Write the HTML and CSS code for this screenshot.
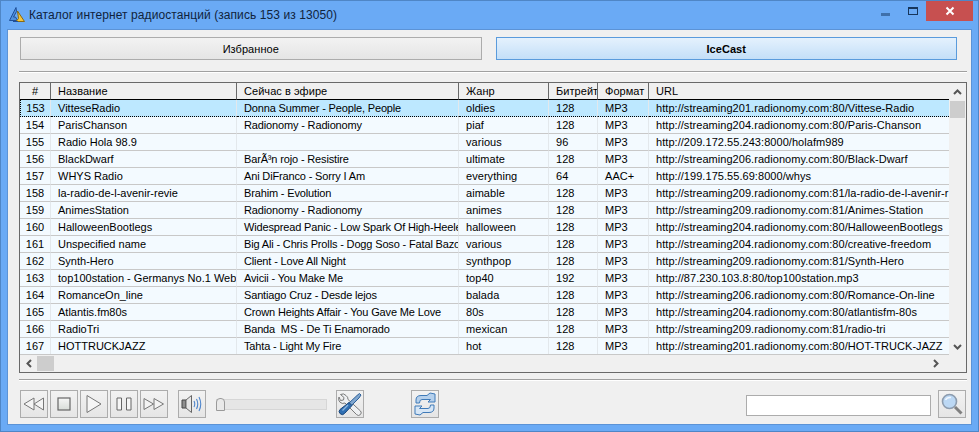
FILE: index.html
```html
<!DOCTYPE html>
<html>
<head>
  <title>Каталог интернет радиостанций</title>
  <meta charset="utf-8">
  <link rel="stylesheet" href="styles.css">
</head>
<body>
<div class="window">
  <div class="titlebar">
    <svg class="app-icon" width="18" height="18" viewBox="0 0 18 18">
      <path d="M8 1.500 L1.500 14.500 H9.500 L7.500 11 H5.500 L8.500 5.500 Z" fill="#4f8fdc" stroke="#1f4f98"/>
      <path d="M9.500 5 L16.500 15.500 H8 L10.500 12.500 Z" fill="#f4c53c" stroke="#8a6a12"/>
      <path d="M5 15.500 H10" stroke="#1f4f98"/>
    </svg>
    <span class="title">Каталог интернет радиостанций (запись 153 из 13050)</span>
    <div class="caption">
      <div class="cap-btn"><span class="cap-min"></span></div>
      <div class="cap-btn cap-btn-max"><span class="cap-max"></span></div>
      <div class="cap-close">
        <svg width="10" height="10" viewBox="0 0 10 10"><path d="M1.500 1.500 L8.500 8.500 M8.500 1.500 L1.500 8.500" stroke="#fff" stroke-width="2"/></svg>
      </div>
    </div>
  </div>

  <div class="client">
    <div class="tabs">
      <div class="tab">Избранное</div>
      <div class="tab active">IceCast</div>
    </div>
    <div class="sep"></div>

    <div class="list">
      <div class="list-main">
        <div class="list-cols">
          <table class="stations">
            <colgroup>
              <col class="c-num"><col class="c-name"><col class="c-now"><col class="c-genre"><col class="c-rate"><col class="c-fmt"><col class="c-url">
            </colgroup>
            <thead>
              <tr><th class="center">#</th><th>Название</th><th>Сейчас в эфире</th><th>Жанр</th><th>Битрейт</th><th>Формат</th><th>URL</th></tr>
            </thead>
            <tbody>
              <tr class="selected"><td class="center">153</td><td>VitteseRadio</td><td>Donna Summer - People, People</td><td>oldies</td><td>128</td><td>MP3</td><td>http://streaming201.radionomy.com:80/Vittese-Radio</td></tr>
              <tr><td class="center">154</td><td>ParisChanson</td><td>Radionomy - Radionomy</td><td>piaf</td><td>128</td><td>MP3</td><td>http://streaming204.radionomy.com:80/Paris-Chanson</td></tr>
              <tr><td class="center">155</td><td>Radio Hola 98.9</td><td></td><td>various</td><td>96</td><td>MP3</td><td>http://209.172.55.243:8000/holafm989</td></tr>
              <tr><td class="center">156</td><td>BlackDwarf</td><td>BarÃ³n rojo - Resistire</td><td>ultimate</td><td>128</td><td>MP3</td><td>http://streaming206.radionomy.com:80/Black-Dwarf</td></tr>
              <tr><td class="center">157</td><td>WHYS Radio</td><td>Ani DiFranco - Sorry I Am</td><td>everything</td><td>64</td><td>AAC+</td><td>http://199.175.55.69:8000/whys</td></tr>
              <tr><td class="center">158</td><td>la-radio-de-l-avenir-revie</td><td>Brahim - Evolution</td><td>aimable</td><td>128</td><td>MP3</td><td>http://streaming209.radionomy.com:81/la-radio-de-l-avenir-r</td></tr>
              <tr><td class="center">159</td><td>AnimesStation</td><td>Radionomy - Radionomy</td><td>animes</td><td>128</td><td>MP3</td><td>http://streaming209.radionomy.com:81/Animes-Station</td></tr>
              <tr><td class="center">160</td><td>HalloweenBootlegs</td><td>Widespread Panic - Low Spark Of High-Heele</td><td>halloween</td><td>128</td><td>MP3</td><td>http://streaming204.radionomy.com:80/HalloweenBootlegs</td></tr>
              <tr><td class="center">161</td><td>Unspecified name</td><td>Big Ali - Chris Prolls - Dogg Soso - Fatal Bazoo</td><td>various</td><td>128</td><td>MP3</td><td>http://streaming204.radionomy.com:80/creative-freedom</td></tr>
              <tr><td class="center">162</td><td>Synth-Hero</td><td>Client - Love All Night</td><td>synthpop</td><td>128</td><td>MP3</td><td>http://streaming209.radionomy.com:81/Synth-Hero</td></tr>
              <tr><td class="center">163</td><td>top100station - Germanys No.1 Web</td><td>Avicii - You Make Me</td><td>top40</td><td>192</td><td>MP3</td><td>http://87.230.103.8:80/top100station.mp3</td></tr>
              <tr><td class="center">164</td><td>RomanceOn_line</td><td>Santiago Cruz - Desde lejos</td><td>balada</td><td>128</td><td>MP3</td><td>http://streaming206.radionomy.com:80/Romance-On-line</td></tr>
              <tr><td class="center">165</td><td>Atlantis.fm80s</td><td>Crown Heights Affair - You Gave Me Love</td><td>80s</td><td>128</td><td>MP3</td><td>http://streaming204.radionomy.com:80/atlantisfm-80s</td></tr>
              <tr><td class="center">166</td><td>RadioTri</td><td>Banda&nbsp;&nbsp;MS - De Ti Enamorado</td><td>mexican</td><td>128</td><td>MP3</td><td>http://streaming209.radionomy.com:81/radio-tri</td></tr>
              <tr><td class="center">167</td><td>HOTTRUCKJAZZ</td><td>Tahta - Light My Fire</td><td>hot</td><td>128</td><td>MP3</td><td>http://streaming201.radionomy.com:80/HOT-TRUCK-JAZZ</td></tr>
            </tbody>
          </table>
        </div>
        <div class="vscroll">
          <svg class="arrow" width="9" height="6" viewBox="0 0 9 6"><path d="M1 5 L4.500 1.500 L8 5" fill="none" stroke="#555" stroke-width="2"/></svg>
          <div class="vthumb"></div>
          <svg class="arrow arrow-down" width="9" height="6" viewBox="0 0 9 6"><path d="M1 1 L4.500 4.500 L8 1" fill="none" stroke="#555" stroke-width="2"/></svg>
        </div>
      </div>
      <div class="hscroll">
        <svg width="6" height="9" viewBox="0 0 6 9"><path d="M5 1 L1.500 4.500 L5 8" fill="none" stroke="#555" stroke-width="2"/></svg>
        <div class="hthumb"></div>
        <svg class="arrow-right" width="6" height="9" viewBox="0 0 6 9"><path d="M1 1 L4.500 4.500 L1 8" fill="none" stroke="#555" stroke-width="2"/></svg>
      </div>
    </div>

    <div class="sep sep-bottom"></div>

    <div class="toolbar">
      <div class="btn"><svg width="22" height="14" viewBox="0 0 22 14"><path d="M1 7 L11 1 V13 Z M11 7 L20.500 1 V13 Z" fill="#f4f4f4" stroke="#777"/></svg></div>
      <div class="btn"><svg width="14" height="14" viewBox="0 0 14 14"><defs><linearGradient id="stopg" x1="0" y1="0" x2="0" y2="1"><stop offset="0" stop-color="#f6f6f6"/><stop offset="1" stop-color="#d8dcd8"/></linearGradient></defs><rect x="1" y="1" width="12" height="12" fill="url(#stopg)" stroke="#666" stroke-width="1.200"/></svg></div>
      <div class="btn"><svg width="16" height="20" viewBox="0 0 16 20"><path d="M1 1.500 L15 10 L1 18.500 Z" fill="#f6f6f6" stroke="#777"/></svg></div>
      <div class="btn"><svg width="16" height="14" viewBox="0 0 16 14"><path d="M1 1 H5.500 V13 H1 Z M10.500 1 H15 V13 H10.500 Z" fill="#f6f6f6" stroke="#666"/></svg></div>
      <div class="btn"><svg width="22" height="14" viewBox="0 0 22 14"><path d="M1 1.500 L10.500 7 L1 12.500 Z M11 1.500 L20.500 7 L11 12.500 Z" fill="#f4f4f4" stroke="#777"/></svg></div>
      <div class="btn btn-volume">
        <svg width="22" height="20" viewBox="0 0 22 20">
          <path d="M1 6 H5 V14 H1 Z" fill="#8e8e8e" stroke="#444"/>
          <path d="M5 6 L10.500 1.500 V18.500 L5 14 Z" fill="#e6e6e6" stroke="#666"/>
          <path d="M13 7 Q14.500 10 13 13 M15.500 5 Q18 10 15.500 15 M18 3 Q21.500 10 18 17" fill="none" stroke="#4f86cc" stroke-width="1.100"/>
        </svg>
      </div>
      <div class="slider"><div class="slider-thumb"></div></div>
      <div class="btn btn-tools">
        <svg width="24" height="24" viewBox="0 0 24 24">
          <path d="M8 3.500 A4.500 4.500 0 0 0 2.500 2.500 L6 5.500 L5.500 8 L2.500 8.500 L1 5 A4.500 4.500 0 0 0 7 11 L18.500 22.500 A2 2 0 0 0 22.500 19 L10 7.500 A4.500 4.500 0 0 0 8 3.500 Z" fill="#eef0f2" stroke="#7a7a7a"/>
          <path d="M21.500 1.500 L23 3 L21 6 L13 14 L10.500 11.500 L19 3.500 Z" fill="#7fa6cf" stroke="#2d5f98"/>
          <path d="M11 10.500 L14 13.500 L6.500 21.500 A3 3 0 0 1 2 17.500 Z" fill="#2f6fb3" stroke="#1a4578"/>
          <path d="M10 13 L4.500 18.500" stroke="#8db7e0" stroke-width="1.200"/>
        </svg>
      </div>
      <div class="btn btn-refresh">
        <svg width="24" height="24" viewBox="0 0 24 24">
          <path d="M3 11 V8 Q3 3.500 8 3.500 H14 L17 1 L22 2 V10 H15 L17.500 7.500 H9 Q6.500 7.500 6.500 11 Z" fill="#b5d0ec" stroke="#3f7ab8"/>
          <path d="M21 13 V16 Q21 20.500 16 20.500 H10 L7 23 L2 22 V14 H9 L6.500 16.500 H15 Q17.500 16.500 17.500 13 Z" fill="#d6e6f6" stroke="#3f7ab8"/>
        </svg>
      </div>
      <input class="search" type="text">
      <div class="btn btn-search">
        <svg width="24" height="24" viewBox="0 0 24 24">
          <circle cx="9.500" cy="9.500" r="7" fill="#bcd8f4" stroke="#8d9cae" stroke-width="1.600"/>
          <path d="M5.500 8 Q7 5 11 5.500" fill="none" stroke="#f0f7ff" stroke-width="1.500"/>
          <path d="M15 15 L21.500 21.500" stroke="#808080" stroke-width="3"/>
        </svg>
      </div>
    </div>
  </div>
</div>
</body>
</html>
```

FILE: styles.css
```css
* {
  box-sizing: border-box;
}
html, body {
  margin: 0;
  height: 100%;
  overflow: hidden;
}
body {
  font-family: "Liberation Sans", Arial, sans-serif;
  font-size: 11px;
  letter-spacing: 0.05px;
  color: #000;
}
.window {
  width: 979px;
  height: 432px;
  background: #6aaaf5;
  border: 1px solid #4f86c6;
  display: flex;
  flex-direction: column;
}
.titlebar {
  height: 28px;
  display: flex;
  align-items: center;
  padding-left: 7px;
  flex: none;
}
.app-icon {
  margin-right: 3px;
}
.title {
  font-size: 12px;
  letter-spacing: 0.08px;
  color: #10233c;
}
.caption {
  margin-left: auto;
  margin-right: 5px;
  align-self: flex-start;
  display: flex;
}
.cap-btn {
  width: 27px;
  height: 20px;
  display: flex;
  align-items: center;
  justify-content: center;
}
.cap-btn-max {
  padding-left: 1px;
}
.cap-min {
  width: 9px;
  height: 3px;
  margin-top: 6px;
  background: #3f70ab;
}
.cap-max {
  width: 10px;
  height: 8px;
  border: 1px solid #17365c;
  border-top-width: 2px;
}
.cap-close {
  width: 47px;
  height: 20px;
  background: #c75050;
  display: flex;
  align-items: center;
  justify-content: center;
}
.client {
  flex: 1;
  margin: 0 6px 6px 6px;
  background: #f0f0f0;
  border: 1px solid #5c93d6;
  padding: 7px 4px 0 12px;
}
.tabs {
  display: flex;
  gap: 14px;
  margin-right: 10px;
}
.tab {
  width: 462px;
  height: 23px;
  border: 1px solid #acacac;
  background: linear-gradient(#f2f2f2, #e5e5e5);
  display: flex;
  align-items: center;
  justify-content: center;
}
.tab.active {
  border-color: #5a9bdc;
  background: linear-gradient(#e4f1fd, #c4dff8);
  font-weight: bold;
}
.sep {
  height: 2px;
  background: #a0a0a0;
  border-bottom: 1px solid #fff;
  margin: 11px 0 9px -1px;
}
.list {
  border: 1px solid #696969;
  height: 291px;
  margin-left: -1px;
  display: flex;
  flex-direction: column;
  background: #f0f0f0;
}
.list-main {
  display: flex;
  height: 272px;
}
.list-cols {
  width: 931px;
  overflow: hidden;
  background: #f3faff;
  border-bottom: 1px solid #c8c8c8;
}
.stations {
  border-collapse: separate;
  border-spacing: 0;
  table-layout: fixed;
  width: 931px;
}
.c-num { width: 31px; }
.c-name { width: 186px; }
.c-now { width: 222px; }
.c-genre { width: 90px; }
.c-rate { width: 49px; }
.c-fmt { width: 51px; }
.c-url { width: 302px; }
th, td {
  padding: 0 0 0 7px;
  text-align: left;
  font-weight: normal;
  white-space: nowrap;
  overflow: hidden;
  height: 17px;
  line-height: 16px;
}
th {
  height: 16px;
  background: #f0f0f0;
  border-right: 1px solid #696969;
  border-bottom: 1px solid #000;
}
th:last-child {
  border-right: 0;
}
td {
  border-right: 1px solid #e3e8ec;
  border-bottom: 1px solid #c8c8c8;
}
td:nth-child(2) {
  letter-spacing: 0;
}
td:nth-child(3) {
  letter-spacing: -0.15px;
}
td:last-child {
  border-right: 0;
}
.center {
  padding: 0;
  text-align: center;
}
tr.selected td {
  background: #bde8ff;
  border-bottom: 1px dotted #000;
}
tr.selected td:first-child {
  border-left: 1px dotted #000;
}
tr.selected td:last-child {
  border-right: 1px dotted #000;
}
.vscroll {
  width: 17px;
  display: flex;
  flex-direction: column;
  align-items: center;
  padding-top: 6px;
}
.vthumb {
  width: 15px;
  height: 17px;
  margin-top: 6px;
  background: #cdcdcd;
}
.arrow-down {
  margin-top: auto;
  margin-bottom: 5px;
}
.hscroll {
  flex: 1;
  display: flex;
  align-items: center;
  padding: 0 7px 0 6px;
}
.hthumb {
  width: 17px;
  height: 15px;
  margin-left: 5px;
  background: #cdcdcd;
}
.arrow-right {
  margin-left: auto;
  margin-right: 20px;
}
.sep-bottom {
  margin: 6px 0 9px -1px;
}
.toolbar {
  display: flex;
  align-items: center;
  height: 28px;
}
.btn {
  width: 28px;
  height: 28px;
  margin-right: 2px;
  border: 1px solid #acacac;
  background: linear-gradient(#f2f2f2, #e5e5e5);
  display: flex;
  align-items: center;
  justify-content: center;
  flex: none;
}
.btn-volume {
  margin-left: 8px;
  margin-right: 0;
}
.slider {
  width: 111px;
  height: 11px;
  margin-left: 10px;
  background: #e6e6e6;
  border: 1px solid #d6d6d6;
  position: relative;
}
.slider-thumb {
  position: absolute;
  left: -1px;
  top: -2px;
  width: 9px;
  height: 13px;
  background: #e9e9e9;
  border: 1px solid #9a9a9a;
  border-radius: 4px 4px 0 0;
}
.btn-tools {
  margin-left: 9px;
  margin-right: 0;
}
.btn-refresh {
  margin-left: 47px;
  margin-right: 0;
}
.search {
  width: 185px;
  height: 21px;
  margin: 2px 7px 0 auto;
  border: 1px solid #acacac;
  background: #fff;
  padding: 0;
}
.btn-search {
  margin-right: 1px;
}
```
